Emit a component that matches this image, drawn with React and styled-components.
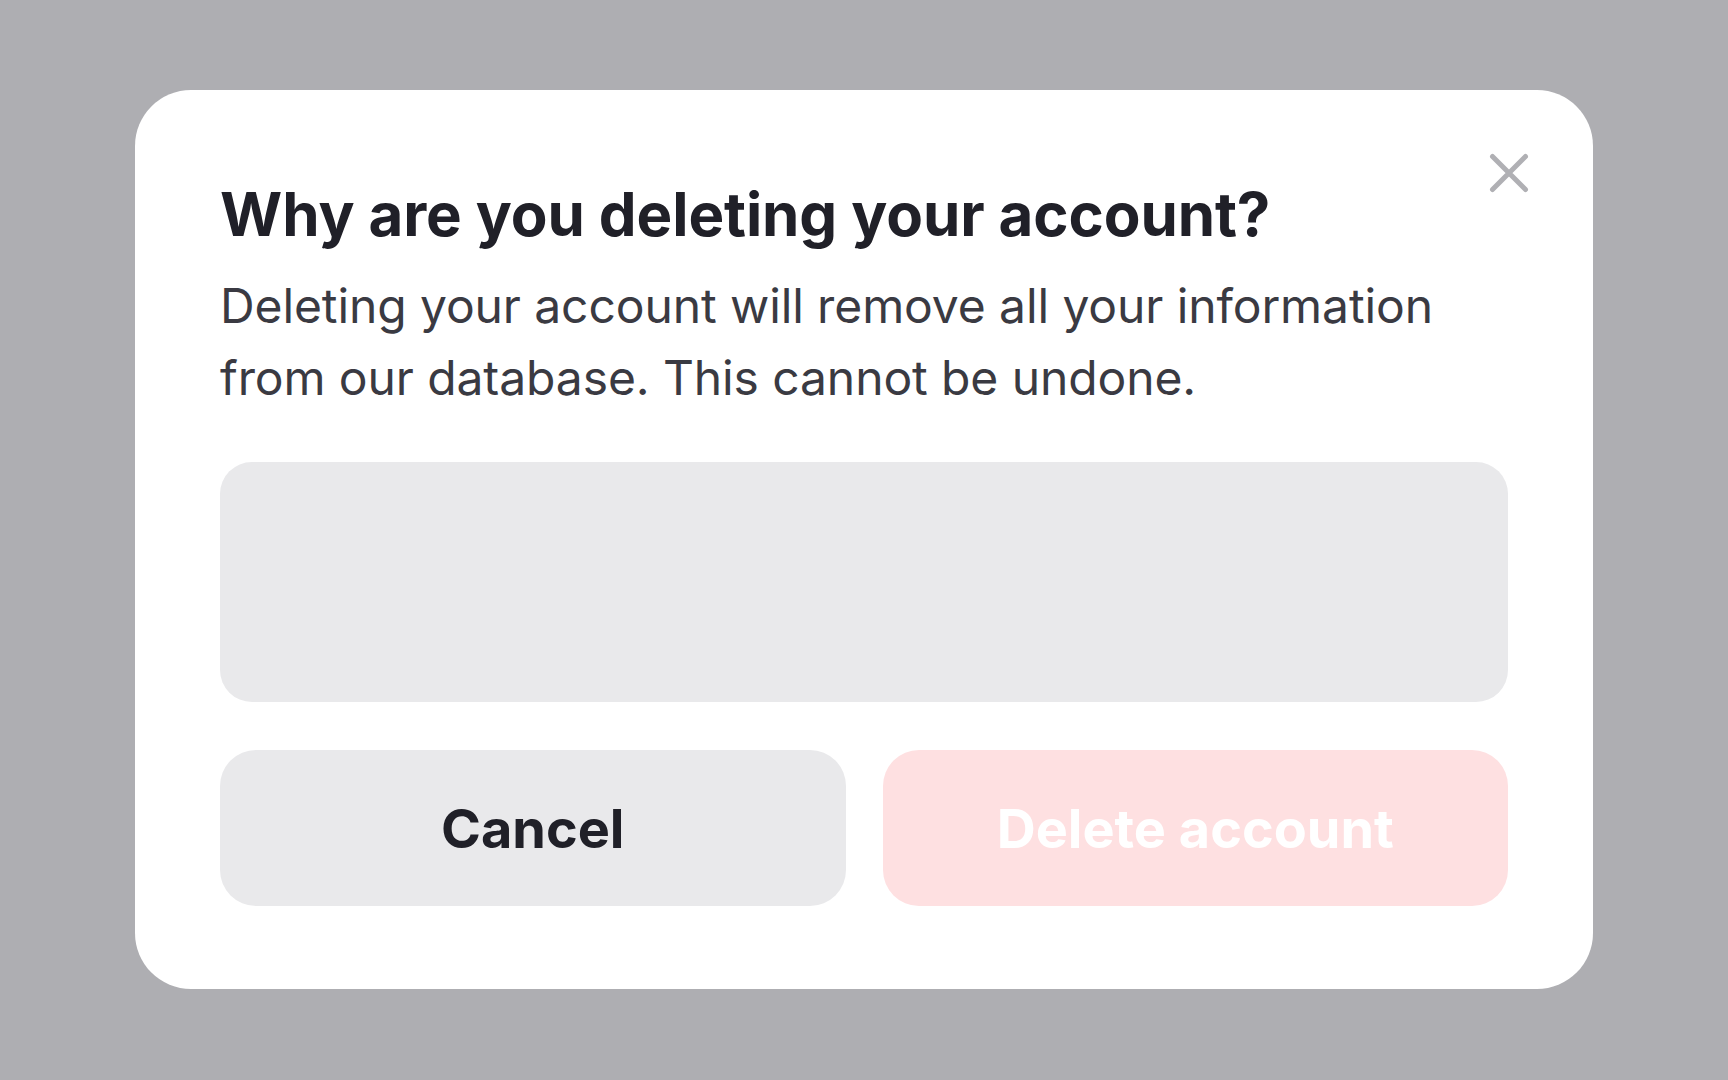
import React from "react";
import styled, { createGlobalStyle } from "styled-components";

const GlobalStyle = createGlobalStyle`
  html, body {
    margin: 0;
    padding: 0;
    background: #aeaeb2;
    font-family: Inter, "Noto Sans", sans-serif;
  }
`;

const Backdrop = styled.main`
  width: 1728px;
  height: 1080px;
  display: flex;
  align-items: flex-start;
  justify-content: center;
  padding-top: 90px;
  box-sizing: border-box;
`;

const Dialog = styled.section`
  position: relative;
  width: 1458px;
  box-sizing: border-box;
  padding: 84px 85px 83px;
  background: #ffffff;
  border-radius: 56px;
  display: flex;
  flex-direction: column;
`;

const CloseButton = styled.button`
  position: absolute;
  top: 63px;
  right: 64px;
  width: 40px;
  height: 40px;
  padding: 0;
  border: 0;
  background: transparent;
  cursor: pointer;
  display: flex;
`;

const Title = styled.h2`
  margin: 0;
  font-size: 60px;
  line-height: 80px;
  font-weight: 700;
  letter-spacing: -0.1px;
  color: #202028;
`;

const Description = styled.p`
  margin: 16px 0 0;
  font-size: 48px;
  line-height: 72px;
  font-weight: 400;
  letter-spacing: -0.1px;
  color: #3a3a42;
`;

const Reason = styled.textarea`
  margin-top: 48px;
  height: 240px;
  border: 0;
  border-radius: 32px;
  background: #e9e9eb;
  resize: none;
  outline: none;
  padding: 32px;
  box-sizing: border-box;
  font-family: inherit;
  font-size: 48px;
`;

const Actions = styled.div`
  margin-top: 48px;
  display: grid;
  grid-template-columns: 1fr 1fr;
  gap: 37px;
`;

const ActionButton = styled.button`
  height: 156px;
  border: 0;
  border-radius: 36px;
  font-family: inherit;
  font-size: 54px;
  font-weight: 700;
  background: ${(p) => (p.$danger ? "#fee0e1" : "#e9e9eb")};
  color: ${(p) => (p.$danger ? "#ffffff" : "#202028")};
  cursor: ${(p) => (p.disabled ? "default" : "pointer")};
`;

export default function App() {
  return (
    <>
      <GlobalStyle />
      <Backdrop>
        <Dialog>
          <CloseButton aria-label="Close">
            <svg width="40" height="40" viewBox="0 0 40 40">
              <path
                d="M3.5 3.5 L36.5 36.5 M36.5 3.5 L3.5 36.5"
                stroke="#b0b0b4"
                strokeWidth="5"
                strokeLinecap="round"
                fill="none"
              />
            </svg>
          </CloseButton>
          <Title>Why are you deleting your account?</Title>
          <Description>
            Deleting your account will remove all your information
            <br />
            from our database. This cannot be undone.
          </Description>
          <Reason />
          <Actions>
            <ActionButton>Cancel</ActionButton>
            <ActionButton $danger disabled>
              Delete account
            </ActionButton>
          </Actions>
        </Dialog>
      </Backdrop>
    </>
  );
}
